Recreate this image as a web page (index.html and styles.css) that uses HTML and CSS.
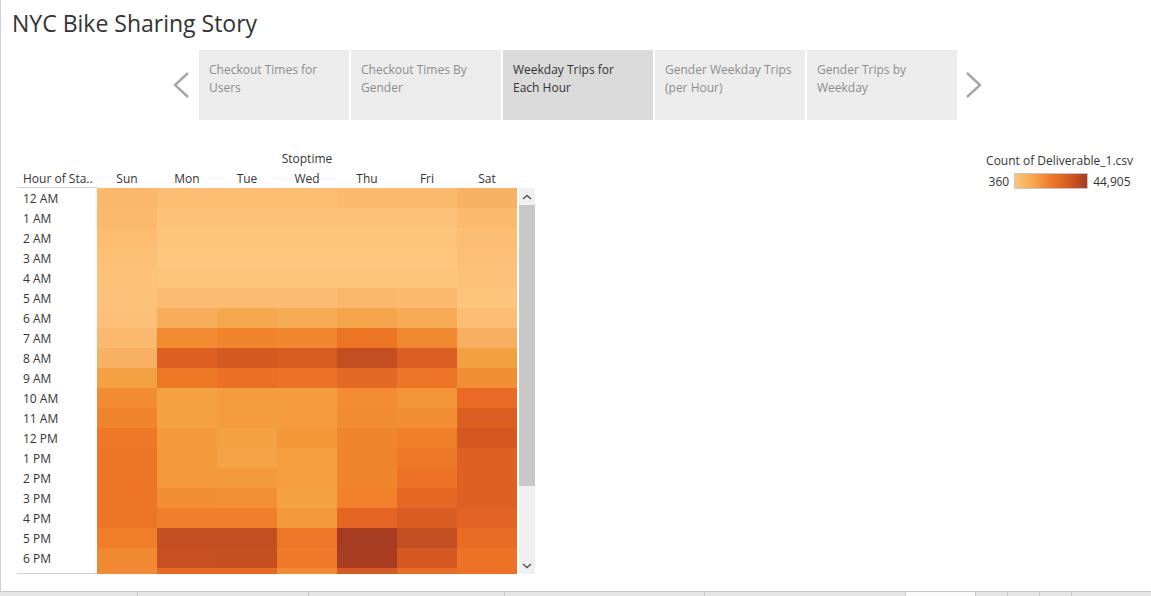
FILE: index.html
```html
<!DOCTYPE html>
<html>
<head>
<meta charset="utf-8">
<title>NYC Bike Sharing Story</title>
<link rel="stylesheet" href="styles.css">
</head>
<body>
<div class="frame">
  <h1 class="title">NYC Bike Sharing Story</h1>
  <nav class="story-nav">
    <div class="arrow arrow-left"><svg width="18" height="26" viewBox="0 0 18 26"><polyline points="16,1 3,13 16,25" fill="none" stroke="#a6a6a6" stroke-width="2.4"/></svg></div>
    <div class="tab">Checkout Times for<br>Users</div>
    <div class="tab">Checkout Times By<br>Gender</div>
    <div class="tab tab-active">Weekday Trips for<br>Each Hour</div>
    <div class="tab">Gender Weekday Trips<br>(per Hour)</div>
    <div class="tab">Gender Trips by<br>Weekday</div>
    <div class="arrow arrow-right"><svg width="18" height="26" viewBox="0 0 18 26"><polyline points="2,1 15,13 2,25" fill="none" stroke="#a6a6a6" stroke-width="2.4"/></svg></div>
  </nav>
  <div class="dashboard">
    <div class="sheet">
      <div class="col-title">Stoptime</div>
      <div class="col-headers">
        <div class="row-title">Hour of Sta..</div>
        <div class="ch">Sun</div><div class="ch">Mon</div><div class="ch">Tue</div><div class="ch">Wed</div><div class="ch">Thu</div><div class="ch">Fri</div><div class="ch">Sat</div>
      </div>
      <div class="sheet-body">
        <div class="labels">
          <div class="lbl">12 AM</div><div class="lbl">1 AM</div><div class="lbl">2 AM</div><div class="lbl">3 AM</div><div class="lbl">4 AM</div><div class="lbl">5 AM</div><div class="lbl">6 AM</div><div class="lbl">7 AM</div><div class="lbl">8 AM</div><div class="lbl">9 AM</div><div class="lbl">10 AM</div><div class="lbl">11 AM</div><div class="lbl">12 PM</div><div class="lbl">1 PM</div><div class="lbl">2 PM</div><div class="lbl">3 PM</div><div class="lbl">4 PM</div><div class="lbl">5 PM</div><div class="lbl">6 PM</div>
        </div>
        <div class="cells">
          <div class="row"><div class="c" style="background:#fbb86d"></div><div class="c" style="background:#fcbd72"></div><div class="c" style="background:#fcbd72"></div><div class="c" style="background:#fcbd72"></div><div class="c" style="background:#fbba6e"></div><div class="c" style="background:#fbba6e"></div><div class="c" style="background:#f8b165"></div></div>
          <div class="row"><div class="c" style="background:#fbb96e"></div><div class="c" style="background:#fdc37a"></div><div class="c" style="background:#fdc37a"></div><div class="c" style="background:#fdc37a"></div><div class="c" style="background:#fdc27a"></div><div class="c" style="background:#fdc27a"></div><div class="c" style="background:#fbba6e"></div></div>
          <div class="row"><div class="c" style="background:#fcbc72"></div><div class="c" style="background:#fdc47c"></div><div class="c" style="background:#fdc47c"></div><div class="c" style="background:#fdc47c"></div><div class="c" style="background:#fdc47c"></div><div class="c" style="background:#fdc47c"></div><div class="c" style="background:#fcbe74"></div></div>
          <div class="row"><div class="c" style="background:#fdc077"></div><div class="c" style="background:#fdc57d"></div><div class="c" style="background:#fdc57d"></div><div class="c" style="background:#fdc57d"></div><div class="c" style="background:#fdc57d"></div><div class="c" style="background:#fdc57d"></div><div class="c" style="background:#fcc078"></div></div>
          <div class="row"><div class="c" style="background:#fdc178"></div><div class="c" style="background:#fdc47c"></div><div class="c" style="background:#fdc47c"></div><div class="c" style="background:#fdc47c"></div><div class="c" style="background:#fdc47c"></div><div class="c" style="background:#fdc47c"></div><div class="c" style="background:#fdc279"></div></div>
          <div class="row"><div class="c" style="background:#fdc27a"></div><div class="c" style="background:#fbbb72"></div><div class="c" style="background:#fbbb72"></div><div class="c" style="background:#fbbb72"></div><div class="c" style="background:#fab86e"></div><div class="c" style="background:#fbba70"></div><div class="c" style="background:#fdc47c"></div></div>
          <div class="row"><div class="c" style="background:#fdc078"></div><div class="c" style="background:#f7ad5a"></div><div class="c" style="background:#f5a84f"></div><div class="c" style="background:#f6ab55"></div><div class="c" style="background:#f4a44b"></div><div class="c" style="background:#f6ab54"></div><div class="c" style="background:#fcbd74"></div></div>
          <div class="row"><div class="c" style="background:#fbb96f"></div><div class="c" style="background:#f18a30"></div><div class="c" style="background:#f0852d"></div><div class="c" style="background:#f0872e"></div><div class="c" style="background:#ec7524"></div><div class="c" style="background:#f0882f"></div><div class="c" style="background:#f7b062"></div></div>
          <div class="row"><div class="c" style="background:#f8b164"></div><div class="c" style="background:#de5f22"></div><div class="c" style="background:#d55a21"></div><div class="c" style="background:#d75c22"></div><div class="c" style="background:#c24e22"></div><div class="c" style="background:#db5f22"></div><div class="c" style="background:#f3a042"></div></div>
          <div class="row"><div class="c" style="background:#f3a143"></div><div class="c" style="background:#ed7826"></div><div class="c" style="background:#eb7025"></div><div class="c" style="background:#ec7326"></div><div class="c" style="background:#e36a24"></div><div class="c" style="background:#ed7526"></div><div class="c" style="background:#f18e36"></div></div>
          <div class="row"><div class="c" style="background:#f28c33"></div><div class="c" style="background:#f4a142"></div><div class="c" style="background:#f49d3f"></div><div class="c" style="background:#f49d3f"></div><div class="c" style="background:#f28d34"></div><div class="c" style="background:#f39538"></div><div class="c" style="background:#e96a24"></div></div>
          <div class="row"><div class="c" style="background:#f0842e"></div><div class="c" style="background:#f4a142"></div><div class="c" style="background:#f49d3e"></div><div class="c" style="background:#f49c3e"></div><div class="c" style="background:#f28c33"></div><div class="c" style="background:#f28f35"></div><div class="c" style="background:#dc5f22"></div></div>
          <div class="row"><div class="c" style="background:#ee7828"></div><div class="c" style="background:#f39a3d"></div><div class="c" style="background:#f4a143"></div><div class="c" style="background:#f39739"></div><div class="c" style="background:#f08530"></div><div class="c" style="background:#ef7f2b"></div><div class="c" style="background:#d55821"></div></div>
          <div class="row"><div class="c" style="background:#ed7526"></div><div class="c" style="background:#f39a3c"></div><div class="c" style="background:#f4a446"></div><div class="c" style="background:#f49e40"></div><div class="c" style="background:#f08530"></div><div class="c" style="background:#ed7828"></div><div class="c" style="background:#de6023"></div></div>
          <div class="row"><div class="c" style="background:#ed7526"></div><div class="c" style="background:#f39a3c"></div><div class="c" style="background:#f39a3d"></div><div class="c" style="background:#f49e40"></div><div class="c" style="background:#f08530"></div><div class="c" style="background:#eb7226"></div><div class="c" style="background:#de6023"></div></div>
          <div class="row"><div class="c" style="background:#ed7526"></div><div class="c" style="background:#f28f36"></div><div class="c" style="background:#f29036"></div><div class="c" style="background:#f4a244"></div><div class="c" style="background:#f08029"></div><div class="c" style="background:#e66824"></div><div class="c" style="background:#de6023"></div></div>
          <div class="row"><div class="c" style="background:#ed7526"></div><div class="c" style="background:#ef7f2b"></div><div class="c" style="background:#ef7f2b"></div><div class="c" style="background:#f39a3c"></div><div class="c" style="background:#e46523"></div><div class="c" style="background:#d95d22"></div><div class="c" style="background:#e26323"></div></div>
          <div class="row"><div class="c" style="background:#ef7d2a"></div><div class="c" style="background:#c34f22"></div><div class="c" style="background:#c24f22"></div><div class="c" style="background:#ee7628"></div><div class="c" style="background:#a63c21"></div><div class="c" style="background:#c24e22"></div><div class="c" style="background:#e96c25"></div></div>
          <div class="row"><div class="c" style="background:#f18832"></div><div class="c" style="background:#c65022"></div><div class="c" style="background:#c45022"></div><div class="c" style="background:#ef7a2a"></div><div class="c" style="background:#a83d21"></div><div class="c" style="background:#d65922"></div><div class="c" style="background:#ec7326"></div></div>
          <div class="row"><div class="c" style="background:#f28a33"></div><div class="c" style="background:#e86926"></div><div class="c" style="background:#e86926"></div><div class="c" style="background:#f28a33"></div><div class="c" style="background:#d55a23"></div><div class="c" style="background:#e86c24"></div><div class="c" style="background:#ef7025"></div></div>
        </div>
        <div class="scrollbar">
          <div class="sb-btn"><svg width="10" height="6" viewBox="0 0 10 6"><polyline points="1,5 5,1.5 9,5" fill="none" stroke="#555" stroke-width="1.6"/></svg></div>
          <div class="sb-thumb"></div>
          <div class="sb-track"></div>
          <div class="sb-btn"><svg width="10" height="6" viewBox="0 0 10 6"><polyline points="1,1 5,4.5 9,1" fill="none" stroke="#555" stroke-width="1.6"/></svg></div>
        </div>
      </div>
    </div>
    <div class="legend">
      <div class="legend-title">Count of Deliverable_1.csv</div>
      <div class="legend-scale">
        <span>360</span>
        <div class="legend-bar"></div>
        <span>44,905</span>
      </div>
    </div>
  </div>
</div>
<div class="tabbar">
  <div class="btab bt1"></div>
  <div class="btab bt2"></div>
  <div class="btab bt3"></div>
  <div class="btab bt4"></div>
  <div class="btab bt5"></div>
  <div class="btab bt6 btab-on"></div>
  <div class="btab bt7"></div>
  <div class="btab bt7"></div>
  <div class="btab bt7"></div>
  <div class="btab"></div>
</div>
</body>
</html>
```

FILE: styles.css
```css
html, body {
  margin: 0;
  padding: 0;
  background: #ffffff;
  overflow: hidden;
}
body {
  width: 1151px;
  height: 596px;
  font-family: "Open Sans", Lato, sans-serif;
  color: #333333;
}
.frame {
  height: 591px;
  border-left: 1px solid #d0d0d0;
  box-sizing: border-box;
}
.title {
  margin: 0;
  padding: 8px 0 0 11px;
  height: 50px;
  box-sizing: border-box;
  font-size: 23px;
  line-height: 30px;
  font-weight: normal;
  color: #333333;
}
.story-nav {
  display: flex;
  padding-left: 162px;
  height: 70px;
}
.arrow {
  width: 36px;
  display: flex;
  align-items: center;
}
.arrow-left {
  justify-content: flex-end;
  padding-right: 9px;
  box-sizing: border-box;
}
.arrow-right {
  justify-content: flex-start;
  padding-left: 8px;
  box-sizing: border-box;
}
.tab {
  width: 150px;
  margin-right: 2px;
  background: #ececec;
  color: #8c8c8c;
  font-size: 12px;
  line-height: 18px;
  padding: 11px 10px 0 10px;
  box-sizing: border-box;
}
.tab:nth-child(6) {
  margin-right: 0;
}
.tab-active {
  background: #dadada;
  color: #333333;
}
.dashboard {
  display: flex;
  margin-top: 28px;
}
.sheet {
  margin-left: 16px;
  width: 518px;
}
.col-title {
  height: 20px;
  line-height: 22px;
  font-size: 12px;
  padding-left: 80px;
  width: 420px;
  text-align: center;
}
.col-headers {
  display: flex;
  height: 20px;
  line-height: 22px;
  font-size: 12px;
}
.row-title {
  width: 80px;
  padding-left: 6px;
  box-sizing: border-box;
  border-bottom: 1px solid #d4d4d4;
  white-space: nowrap;
  overflow: hidden;
}
.ch {
  width: 60px;
  text-align: center;
}
.sheet-body {
  display: flex;
  height: 386px;
}
.labels {
  width: 80px;
  height: 386px;
  overflow: hidden;
  border-bottom: 1px solid #d0d0d0;
  box-sizing: border-box;
}
.lbl {
  height: 20px;
  padding-left: 6px;
  font-size: 12px;
  line-height: 22px;
  white-space: nowrap;
}
.cells {
  width: 420px;
  height: 386px;
  overflow: hidden;
}
.row {
  display: flex;
  height: 20px;
}
.c {
  width: 60px;
  height: 20px;
}
.scrollbar {
  width: 16px;
  margin-left: 2px;
  height: 386px;
  background: #f0f0f0;
  display: flex;
  flex-direction: column;
}
.sb-btn {
  height: 17px;
  display: flex;
  align-items: center;
  justify-content: center;
}
.sb-thumb {
  height: 281px;
  background: #c8c8c8;
}
.sb-track {
  flex: 1;
}
.legend {
  margin-left: auto;
  margin-right: 18px;
  margin-top: 3px;
  display: flex;
  flex-direction: column;
  align-items: center;
  font-size: 12px;
}
.legend-title {
  height: 20px;
  line-height: 20px;
  white-space: nowrap;
}
.legend-scale {
  display: flex;
  align-items: center;
  height: 20px;
  gap: 5px;
}
.legend-bar {
  width: 74px;
  height: 16px;
  border: 1px solid #c8c8c8;
  box-sizing: border-box;
  background: linear-gradient(to right, #fdc47c 0%, #f7a650 25%, #ee7a2a 50%, #d45a22 75%, #a63c21 100%);
}
.tabbar {
  display: flex;
  height: 5px;
  background: #e6e6e6;
  border-top: 1px solid #c6c6c6;
}
.btab {
  border-right: 1px solid #c8c8c8;
  box-sizing: border-box;
  flex: none;
}
.btab:last-child {
  flex: 1;
  border-right: none;
}
.bt1 { width: 138px; }
.bt2 { width: 171px; }
.bt3 { width: 196px; }
.bt4 { width: 200px; }
.bt5 { width: 201px; }
.bt6 { width: 70px; }
.bt7 { width: 32px; }
.btab-on { background: #fafafa; }
```
